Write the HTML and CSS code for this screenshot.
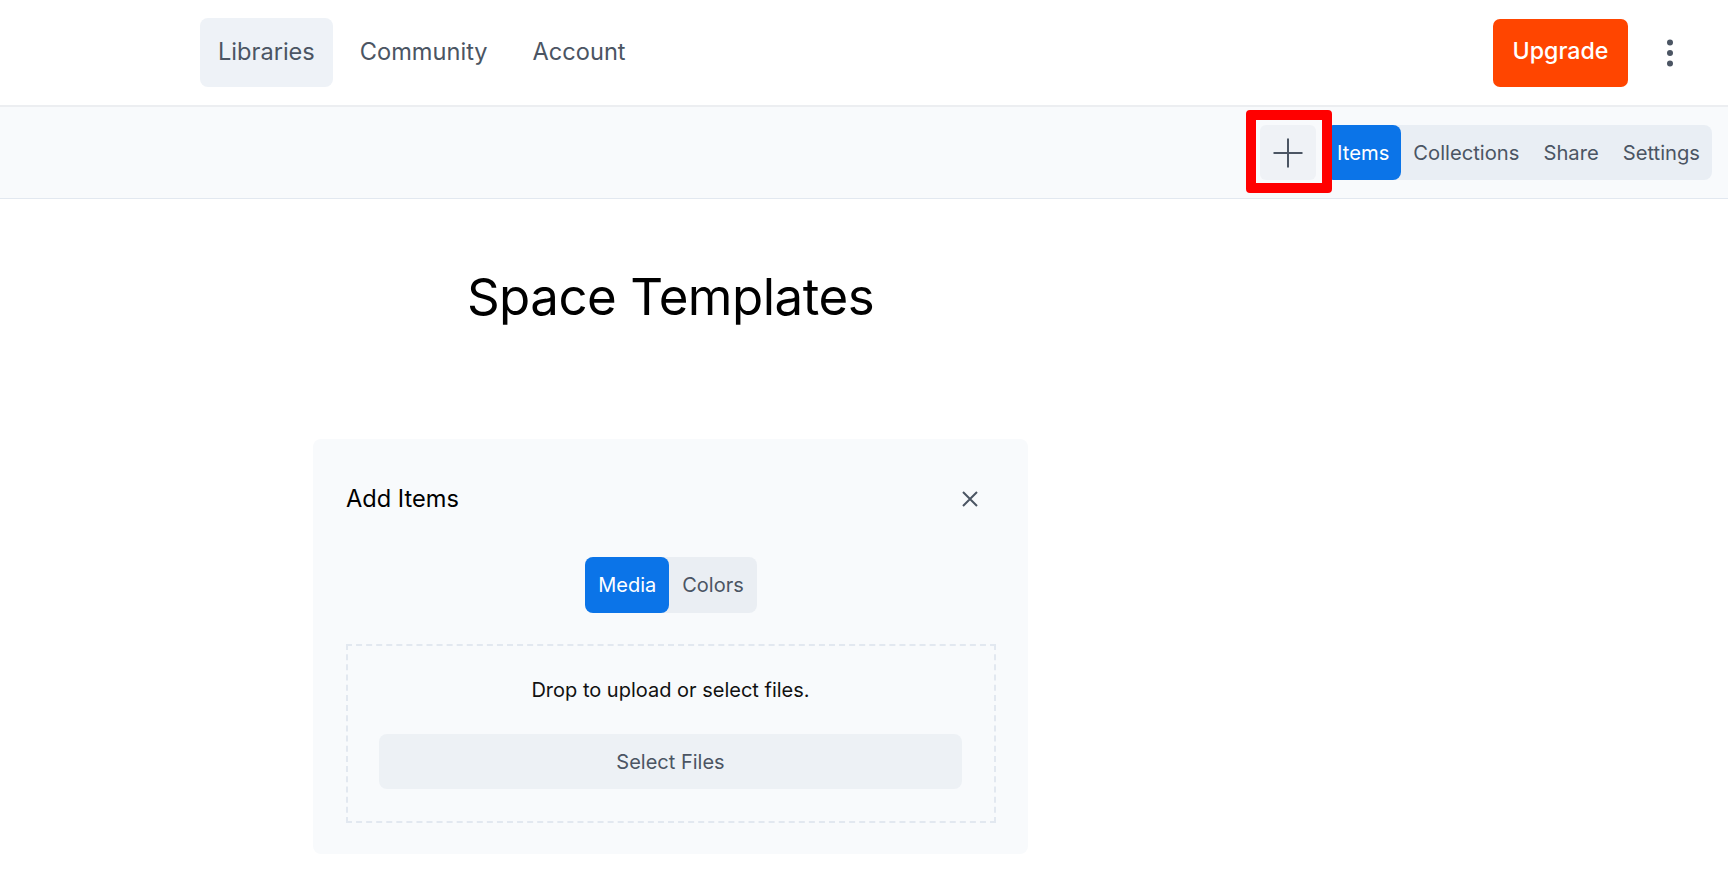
FILE: index.html
```html
<!DOCTYPE html>
<html lang="en">
<head>
<meta charset="utf-8">
<title>Space Templates</title>
<link rel="stylesheet" href="styles.css">
</head>
<body>
<header class="topbar">
  <nav class="mainnav">
    <a class="navlink active" href="#">Libraries</a>
    <a class="navlink" href="#">Community</a>
    <a class="navlink" href="#">Account</a>
  </nav>
  <div class="topbar-right">
    <button class="upgrade">Upgrade</button>
    <button class="kebab" aria-label="More">
      <svg width="8" height="30" viewBox="0 0 8 30"><circle cx="4" cy="4.5" r="3" fill="#4b5563"/><circle cx="4" cy="15" r="3" fill="#4b5563"/><circle cx="4" cy="25.5" r="3" fill="#4b5563"/></svg>
    </button>
  </div>
</header>
<div class="toolbar">
  <div class="add-wrap">
    <button class="addbtn" aria-label="Add">
      <svg width="32" height="32" viewBox="0 0 32 32"><path d="M16 1.5V30.5M1.5 16H30.5" stroke="#4b5563" stroke-width="2" fill="none"/></svg>
    </button>
    <span class="highlight"></span>
  </div>
  <div class="tabs">
    <a class="tab active" href="#">Items</a>
    <a class="tab" href="#">Collections</a>
    <a class="tab" href="#">Share</a>
    <a class="tab" href="#">Settings</a>
  </div>
</div>
<main class="content">
  <h1 class="title">Space Templates</h1>
  <section class="card">
    <div class="card-head">
      <h2 class="card-title">Add Items</h2>
      <button class="close" aria-label="Close">
        <svg width="16" height="16" viewBox="0 0 16 16"><path d="M1 1L15 15M15 1L1 15" stroke="#4b5563" stroke-width="2" fill="none"/></svg>
      </button>
    </div>
    <div class="seg-row">
      <div class="seg">
        <button class="seg-btn active">Media</button>
        <button class="seg-btn">Colors</button>
      </div>
    </div>
    <div class="dropzone">
      <p class="drop-text">Drop to upload or select files.</p>
      <button class="select-btn">Select Files</button>
    </div>
  </section>
</main>
</body>
</html>
```
FILE: styles.css
```css
* { box-sizing: border-box; }
html, body { margin: 0; padding: 0; }
body {
  font-family: Inter, "Noto Sans", "Liberation Sans", sans-serif;
  background: #ffffff;
  color: #000;
}
button { font-family: inherit; border: 0; cursor: pointer; }
a { text-decoration: none; }

.topbar {
  height: 107px;
  border-bottom: 2px solid #eceef1;
  display: flex;
  align-items: center;
  justify-content: space-between;
  padding: 0 38px 0 200px;
}
.mainnav { display: flex; gap: 9px; align-items: center; }
.navlink {
  height: 69px;
  display: flex;
  align-items: center;
  padding: 0 18px 3px;
  border-radius: 8px;
  color: #4b5563;
  font-size: 23.6px;
}
.navlink.active { background: #eef2f7; }
.topbar-right { display: flex; align-items: center; gap: 22px; }
.upgrade {
  width: 135px;
  height: 68px;
  padding: 0 0 3px;
  border-radius: 7px;
  background: #ff4500;
  color: #fff;
  font-size: 23.2px;
  font-weight: 500;
}
.kebab {
  width: 40px;
  height: 40px;
  background: transparent;
  display: flex;
  align-items: center;
  justify-content: center;
  padding: 0;
}

.toolbar {
  height: 92px;
  background: #f8fafc;
  border-bottom: 1px solid #e2e8f0;
  display: flex;
  justify-content: flex-end;
  align-items: center;
  gap: 9px;
  padding-right: 16px;
}
.add-wrap { position: relative; display: flex; }
.addbtn {
  width: 56px;
  height: 55px;
  border-radius: 6px;
  background: #eff2f6;
  display: flex;
  align-items: center;
  justify-content: center;
  padding: 0;
}
.highlight {
  position: absolute;
  left: -14px;
  top: -15px;
  right: -16px;
  bottom: -13px;
  border: 10px solid #ff0000;
  border-radius: 4px;
  pointer-events: none;
}
.tabs {
  display: flex;
  height: 55px;
  background: #e9eef4;
  border-radius: 8px;
  overflow: hidden;
}
.tab {
  display: flex;
  align-items: center;
  padding: 0 12px;
  color: #4b5563;
  font-size: 20.2px;
}
.tab.active { background: #0b74e8; color: #fff; border-radius: 8px; }

.content {
  width: 715px;
  margin-left: 313px;
  padding-top: 66px;
  padding-bottom: 40px;
}
.title {
  margin: 0;
  text-align: center;
  font-size: 51px;
  line-height: 64px;
  font-weight: 400;
  letter-spacing: -0.5px;
  color: #000;
}
.card {
  margin-top: 110px;
  background: #f8fafc;
  border-radius: 8px;
  padding: 32px 32px 31px 33px;
}
.card-head {
  height: 55px;
  display: flex;
  align-items: center;
  justify-content: space-between;
}
.card-title {
  margin: 0;
  font-size: 23.6px;
  font-weight: 400;
  color: #000;
}
.close {
  width: 40px;
  height: 40px;
  margin-right: 6px;
  background: transparent;
  display: flex;
  align-items: center;
  justify-content: center;
  padding: 0;
}
.seg-row { display: flex; justify-content: center; margin-top: 31px; }
.seg {
  display: flex;
  height: 56px;
  background: #eaeef3;
  border-radius: 8px;
}
.seg-btn {
  padding: 0 13px;
  background: transparent;
  color: #4b5563;
  font-size: 20px;
  border-radius: 8px;
}
.seg-btn.active { background: #0b74e8; color: #fff; }
.dropzone {
  margin-top: 31px;
  border: 2px dashed #e2e8f0;
  padding: 30px 32px 32px 31px;
  display: flex;
  flex-direction: column;
  align-items: stretch;
}
.drop-text {
  margin: 0;
  text-align: center;
  font-size: 20px;
  line-height: 28px;
  color: #111;
}
.select-btn {
  margin-top: 30px;
  height: 55px;
  border-radius: 8px;
  background: #edf1f5;
  color: #4b5563;
  font-size: 20px;
}
```
